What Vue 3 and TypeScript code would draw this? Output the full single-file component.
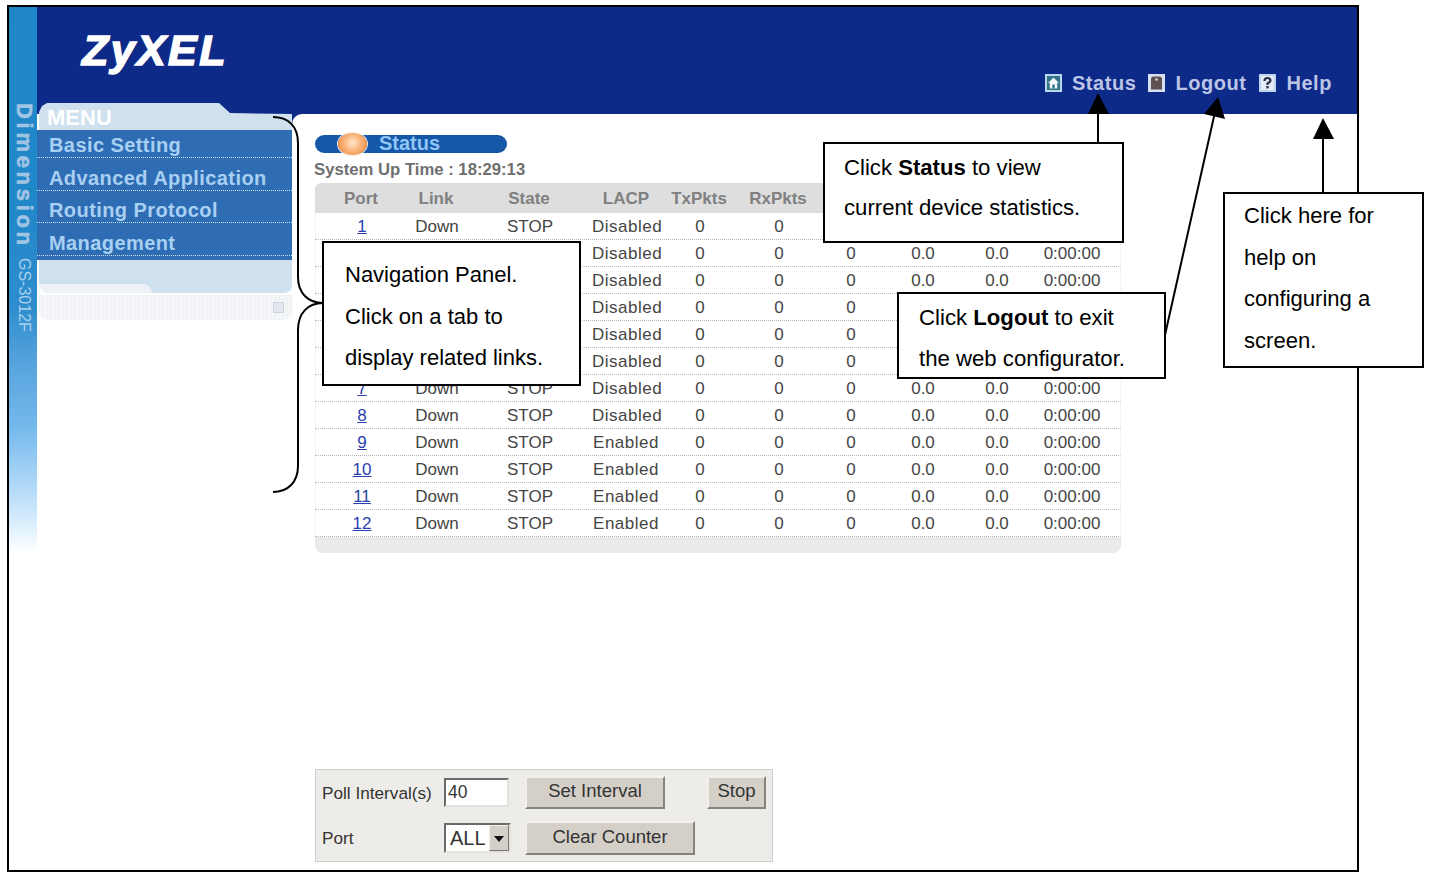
<script setup lang="ts">
const hiddenByNav = (n: number) => n >= 2 && n <= 6
const hiddenByLogout = (n: number) => n >= 4 && n <= 6

interface PortRow { port: number; cells: string[]; lacp: string; stats: string[] }
const ports: PortRow[] = Array.from({ length: 12 }, (_, i) => {
  const n = i + 1
  const full = n !== 1 && !hiddenByLogout(n)
  return {
    port: n,
    cells: hiddenByNav(n) ? ['', ''] : ['Down', 'STOP'],
    lacp: n <= 8 ? 'Disabled' : 'Enabled',
    stats: full ? ['0.0', '0.0', '0:00:00'] : ['', '', ''],
  }
})
const headers = ['Port', 'Link', 'State', 'LACP', 'TxPkts', 'RxPkts']
const menu = ['Basic Setting', 'Advanced Application', 'Routing Protocol', 'Management']
</script>

<template>
  <div class="page">
    <div class="frame">
      <aside class="stripe">
        <span class="dim">Dimension</span>
        <span class="model">GS-3012F</span>
      </aside>
      <div class="main">
        <header class="top">
          <div class="logo">ZyXEL</div>
          <nav class="links">
            <svg class="ico" viewBox="0 0 17 18">
              <rect width="17" height="18" fill="#bcd6ee" />
              <rect x="2" y="2" width="13" height="14" fill="#2f7488" />
              <path d="M8.5 3.5 L14 9 H12.2 V14.5 H4.8 V9 H3 Z" fill="#f2f8fb" />
              <rect x="7.3" y="10.5" width="2.4" height="4" fill="#2f7488" />
            </svg>
            <a class="lnk l1">Status</a>
            <svg class="ico" viewBox="0 0 17 18">
              <rect width="17" height="18" fill="#d6e0f0" />
              <path d="M5.5 2.5 H11.5 Q14 2.5 14 5 V15.5 H3 V5 Q3 2.5 5.5 2.5 Z" fill="#5f5250" />
              <circle cx="8.5" cy="5.5" r="1.2" fill="#e6dfd8" />
            </svg>
            <a class="lnk l2">Logout</a>
            <svg class="ico" viewBox="0 0 17 18">
              <rect width="17" height="18" fill="#bcd6ee" />
              <rect x="2" y="2" width="13" height="14" fill="#e4ecf6" />
              <path d="M5.5 7 Q5.5 4 8.5 4 Q11.5 4 11.5 6.6 Q11.5 8 8.5 9.5 V11" fill="none" stroke="#2a2f4a" stroke-width="2.2" />
              <rect x="7.3" y="12" width="2.4" height="2.4" fill="#2a2f4a" />
            </svg>
            <a class="lnk">Help</a>
          </nav>
        </header>

        <div class="body">
          <div class="side">
            <div class="menu-head">MENU</div>
            <ul class="menu">
              <li v-for="m in menu" :key="m">{{ m }}</li>
            </ul>
            <div class="menu-foot"></div>
            <div class="menu-grid"><i class="grid-ico"></i></div>
          </div>

          <section class="content">
            <div class="pill">
              <span class="orb"></span>
              <span class="pill-text">Status</span>
            </div>
            <div class="uptime">System Up Time : 18:29:13</div>

            <div class="tbl">
              <div class="tr th">
                <div v-for="h in headers" :key="h">{{ h }}</div>
              </div>
              <div v-for="r in ports" :key="r.port" class="tr td">
                <div><a v-if="r.cells[0]" class="port">{{ r.port }}</a></div>
                <div>{{ r.cells[0] }}</div>
                <div>{{ r.cells[1] }}</div>
                <div class="lacp">{{ r.lacp }}</div>
                <div>0</div>
                <div>0</div>
                <div>{{ r.port === 1 ? '' : '0' }}</div>
                <div>{{ r.stats[0] }}</div>
                <div>{{ r.stats[1] }}</div>
                <div>{{ r.stats[2] }}</div>
              </div>
              <div class="tfoot"></div>
            </div>

            <form class="ctrl" @submit.prevent>
              <div class="crow">
                <label class="clabel">Poll Interval(s)</label>
                <input class="cinput" value="40" />
                <button class="btn set">Set Interval</button>
                <button class="btn stop">Stop</button>
              </div>
              <div class="crow r2">
                <label class="clabel">Port</label>
                <div class="csel"><span>ALL</span><b class="arrow"></b></div>
                <button class="btn clear">Clear Counter</button>
              </div>
            </form>
          </section>
        </div>
      </div>
    </div>

    <svg class="marks" width="1432" height="879" viewBox="0 0 1432 879">
      <path d="M273 117 C288 117 298 126 298 143 V277 C298 293 308 303 323 303 C308 303 298 313 298 330 V466 C298 482 288 492 273 492" fill="none" stroke="#000" stroke-width="2" />
      <path d="M1098 143 V110" stroke="#000" stroke-width="2" />
      <path d="M1098 93 L1109 114 H1088 Z" fill="#000" />
      <path d="M1165 335 L1215 112" stroke="#000" stroke-width="2" />
      <path d="M1218 97 L1225 119 L1204 114 Z" fill="#000" />
      <path d="M1323 193 V135" stroke="#000" stroke-width="2" />
      <path d="M1323 118 L1334 139 H1313 Z" fill="#000" />
    </svg>

    <div class="note n-status">Click <b>Status</b> to view<br />current device statistics.</div>
    <div class="note n-nav">Navigation Panel.<br />Click on a tab to<br />display related links.</div>
    <div class="note n-logout">Click <b>Logout</b> to exit<br />the web configurator.</div>
    <div class="note n-help">Click here for<br />help on<br />configuring a<br />screen.</div>
  </div>
</template>

<style>
html, body { margin: 0; background: #fff; }
</style>

<style scoped>
.page {
  position: relative;
  width: 1432px;
  height: 879px;
  overflow: hidden;
  font-family: "Liberation Sans", Arial, sans-serif;
  padding: 5px 0 0 7px;
  box-sizing: border-box;
}
.frame {
  display: flex;
  width: 1352px;
  height: 867px;
  box-sizing: border-box;
  border: 2px solid #000;
  background: #fff;
}
.stripe {
  width: 28px;
  flex: none;
  display: flex;
  flex-direction: column;
  align-items: center;
  padding-top: 96px;
  box-sizing: border-box;
  background: linear-gradient(#1f86c8 0, #2087c8 195px, #2f8dce 300px, #5ba6de 365px, #74b9ec 420px, #b6dcf8 485px, #e4f4fd 525px, #fff 545px);
}
.dim, .model {
  writing-mode: vertical-rl;
  white-space: nowrap;
}
.dim {
  font-weight: bold;
  font-size: 22px;
  letter-spacing: 3.7px;
  line-height: 24px;
  color: #9fc4e4;
  -webkit-text-stroke: 0.6px #9fc4e4;
  margin-left: 1px;
}
.model {
  margin-top: 9px;
  font-size: 16px;
  line-height: 18px;
  color: #a8d0ec;
  margin-left: 2px;
}
.main { flex: 1; display: flex; flex-direction: column; min-width: 0; }
.top {
  height: 107px;
  flex: none;
  background: #0d2a88;
  display: flex;
  justify-content: space-between;
  align-items: flex-start;
  box-sizing: border-box;
  padding: 0 25px 0 45px;
}
.logo {
  margin-top: 20px;
  font-size: 43px;
  line-height: 46px;
  font-weight: bold;
  font-style: italic;
  color: #fff;
  letter-spacing: 2.4px;
  -webkit-text-stroke: 1.5px #fff;
}
.links {
  display: flex;
  align-items: center;
  margin-top: 64px;
  height: 24px;
}
.ico { width: 17px; height: 18px; flex: none; margin-right: 10px; }
.lnk {
  font-size: 20px;
  line-height: 24px;
  font-weight: bold;
  letter-spacing: 0.55px;
  color: #bcc5e6;
}
.l1 { margin-right: 12px; }
.l2 { margin-right: 13px; }
.body {
  flex: 1;
  display: flex;
  background: #fff linear-gradient(#0d2a88, #0d2a88) no-repeat 255px 0 / 12px 12px;
}
.side {
  width: 255px;
  flex: none;
  margin-top: -11px;
  align-self: flex-start;
}
.menu-head {
  height: 27px;
  margin-left: 2px;
  background: #cfe1ee;
  color: #fff;
  font-size: 22px;
  line-height: 30px;
  font-weight: bold;
  padding-left: 8px;
  box-sizing: border-box;
  clip-path: polygon(0 9px, 3px 3px, 8px 0, 180px 0, 191px 10px, 253px 11px, 253px 27px, 0 27px);
}
.menu {
  list-style: none;
  margin: 0;
  padding: 0 0 4px;
  background: #2e6db4;
}
.menu li {
  height: 32.7px;
  box-sizing: border-box;
  display: flex;
  align-items: flex-end;
  padding: 0 0 2px 12px;
  font-size: 20px;
  line-height: 20px;
  font-weight: bold;
  letter-spacing: 0.42px;
  color: #a8d0f2;
  border-bottom: 1.5px dotted #cfe3f5;
}
.menu li:first-child { height: 28px; }
.menu-foot {
  position: relative;
  height: 33px;
  margin-left: 2px;
  background: #cfe1ee;
  border-radius: 0 0 8px 10px;
  overflow: hidden;
}
.menu-foot::after {
  content: "";
  position: absolute;
  left: 0;
  bottom: 0;
  width: 113px;
  height: 9px;
  background: #eef2f6;
  border-top-right-radius: 12px;
}
.menu-grid {
  position: relative;
  height: 25px;
  margin: 2px 0 0 2px;
  background-color: #f6f7f9;
  background-image:
    repeating-linear-gradient(90deg, #eff1f4 0 1px, transparent 1px 4px),
    repeating-linear-gradient(0deg, #f0f2f5 0 1px, transparent 1px 4px);
  border-radius: 0 0 8px 8px;
  display: flex;
  justify-content: flex-end;
  align-items: center;
  padding-right: 8px;
  box-sizing: border-box;
}
.grid-ico {
  width: 9px;
  height: 9px;
  border: 1px solid #ccd3de;
  background: #e4e8ee;
}
.content {
  flex: 1;
  padding: 21px 0 0 23px;
  min-width: 0;
  background: #fff;
  border-top-left-radius: 10px;
}
.pill {
  width: 192px;
  height: 18px;
  background: #1658a8;
  border-radius: 9px;
  display: flex;
  align-items: center;
  padding-left: 23px;
  box-sizing: border-box;
}
.orb {
  width: 29px;
  height: 22px;
  flex: none;
  border-radius: 50%;
  background: radial-gradient(circle at 50% 45%, #ffe6cc 0, #fbb37a 45%, #e5802f 100%);
  box-shadow: 0 0 0 1px #f6ede4;
}
.pill-text {
  margin-left: 12px;
  font-size: 20px;
  line-height: 16px;
  padding-bottom: 2px;
  font-weight: bold;
  color: #8fc6f6;
}
.uptime {
  margin: 7px 0 0 -1px;
  font-size: 16.7px;
  line-height: 20px;
  font-weight: bold;
  color: #6f6f6f;
}
.tbl {
  width: 806px;
  margin-top: 3px;
  color: #454545;
}
.tr {
  display: grid;
  grid-template-columns: 92px 58px 128px 66px 80px 78px 66px 78px 70px 80px;
  padding-right: 10px;
  text-align: center;
  font-size: 17px;
}
.th {
  height: 30px;
  line-height: 31px;
  background: #dedede;
  border-radius: 6px 6px 0 0;
  font-weight: bold;
  color: #808080;
}
.td {
  height: 27px;
  line-height: 27px;
  box-sizing: border-box;
  padding-left: 1px;
  padding-right: 8px;
  border-bottom: 1px dotted #b4b4b4;
  border-right: 1px solid #f4f4f4;
  box-shadow: inset 1px 0 #f4f4f4;
}
.lacp { letter-spacing: 0.5px; margin-left: -2px; white-space: nowrap; }
.port { color: #2a3fb0; text-decoration: underline; }
.tfoot {
  height: 16px;
  background: #ebe9eb;
  border-radius: 0 0 8px 8px;
}
.ctrl {
  width: 458px;
  height: 93px;
  margin-top: 216px;
  box-sizing: border-box;
  border: 1px solid #cfcfcf;
  background: #eeece8;
  padding: 6px 0 0 6px;
  color: #333;
}
.crow { display: flex; align-items: center; height: 33px; }
.r2 { margin-top: 12px; height: 34px; }
.clabel { width: 122px; flex: none; font-size: 17.2px; line-height: 20px; }
.cinput {
  width: 65px;
  height: 29px;
  box-sizing: border-box;
  border: 2px solid;
  border-color: #6a6a6a #e4e2dc #e4e2dc #6a6a6a;
  background: #fff;
  font: 17.5px "Liberation Sans", Arial, sans-serif;
  color: #333;
  padding: 0 2px;
  outline: none;
}
.btn {
  box-sizing: border-box;
  height: 100%;
  border: 2px solid;
  border-color: #f2f0ea #85837d #85837d #f2f0ea;
  background: #d4d0c8;
  font: 18.5px "Liberation Sans", Arial, sans-serif;
  color: #333;
  padding: 0 0 3px;
}
.set { width: 140px; margin-left: 16px; }
.stop { width: 59px; margin-left: 42px; }
.clear { width: 170px; margin-left: 14px; }
.csel {
  width: 67px;
  height: 30px;
  box-sizing: border-box;
  border: 2px solid;
  border-color: #6a6a6a #e4e2dc #e4e2dc #6a6a6a;
  background: #fff;
  display: flex;
  justify-content: space-between;
  font-size: 20px;
  line-height: 26px;
  padding-left: 4px;
}
.arrow {
  width: 20px;
  background: #d4d0c8;
  border: 1px solid;
  border-color: #f2f0ea #77756f #77756f #f2f0ea;
  box-sizing: border-box;
  position: relative;
}
.arrow::after {
  content: "";
  position: absolute;
  left: 4px;
  top: 10px;
  border: 5px solid transparent;
  border-top: 6px solid #111;
  border-bottom: 0;
}
.marks { position: absolute; left: 0; top: 0; pointer-events: none; }
.note {
  position: absolute;
  box-sizing: border-box;
  background: #fff;
  border: 2px solid #000;
  font-size: 22px;
  color: #000;
  white-space: nowrap;
}
.n-status { left: 823px; top: 142px; width: 301px; height: 101px; line-height: 40px; padding: 4px 0 0 19px; font-size: 22.15px; }
.n-nav { left: 322px; top: 241px; width: 259px; height: 145px; line-height: 41.5px; padding: 11px 0 0 21px; }
.n-logout { left: 897px; top: 292px; width: 269px; height: 87px; line-height: 41px; padding: 3px 0 0 20px; font-size: 22.2px; }
.n-help { left: 1223px; top: 192px; width: 201px; height: 176px; line-height: 41.5px; padding: 1px 0 0 19px; font-size: 22.05px; }
</style>
